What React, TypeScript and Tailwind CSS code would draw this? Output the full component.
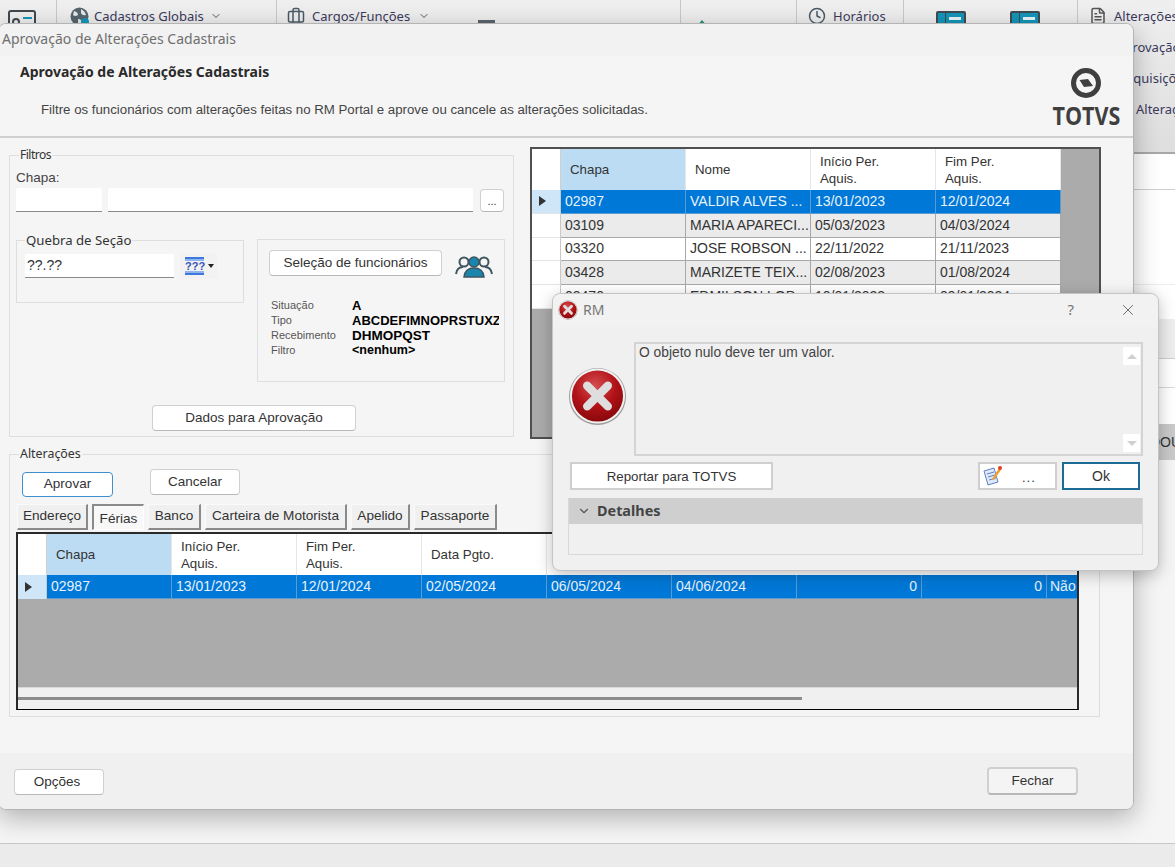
import React from "react";
import { ChevronDown, Clock, FileText, Briefcase, X } from "lucide-react";

const NOTO = "font-['Noto_Sans',sans-serif]";
const ARIAL = "font-['Liberation_Sans',sans-serif]";

function ErrorIcon({ size, id }: { size: number; id: string }) {
  return (
    <svg width={size} height={size} viewBox="0 0 60 60" className="shrink-0">
      <defs>
        <radialGradient id={id} cx="45%" cy="30%" r="75%">
          <stop offset="0%" stopColor="#d64c50" />
          <stop offset="55%" stopColor="#b01216" />
          <stop offset="100%" stopColor="#82070b" />
        </radialGradient>
      </defs>
      <circle cx="30" cy="30" r="29" fill="#9c9c9c" />
      <circle cx="30" cy="29.5" r="28" fill="#f2f2f2" />
      <circle cx="30" cy="29.5" r="26" fill={`url(#${id})`} />
      <path d="M19.5 19 L40.5 40 M40.5 19 L19.5 40" stroke="#dedede" strokeWidth="8.5" strokeLinecap="round" />
    </svg>
  );
}

function TotvsLogo() {
  return (
    <div className="flex flex-col items-center w-[68px]">
      <svg width="32" height="32" viewBox="0 0 32 32">
        <circle cx="16" cy="16" r="12.5" fill="none" stroke="#3f3f3f" strokeWidth="5" />
        <path d="M9.5 13 L18 12 L23 19 L14 20 Z" fill="#3f3f3f" />
      </svg>
      <span className="font-['Open_Sans',sans-serif] font-bold text-[25px] leading-[26px] text-[#3f3f3f] mt-[3px] scale-x-[0.86]">TOTVS</span>
    </div>
  );
}

function BookIcon() {
  return (
    <svg width="30" height="24" viewBox="0 0 30 24" className="shrink-0">
      <rect x="0" y="0" width="30" height="24" rx="2" fill="#3f4a52" />
      <rect x="2" y="2" width="7" height="20" fill="#1495b8" />
      <rect x="10" y="2" width="18" height="20" fill="#1495b8" />
      <rect x="13" y="6" width="12" height="3" fill="#e8f4f8" />
    </svg>
  );
}

function GlobeIcon() {
  return (
    <svg width="20" height="20" viewBox="0 0 20 20" className="shrink-0">
      <circle cx="9.5" cy="9.5" r="9" fill="#56646e" />
      <path d="M4 4 Q8 5 8 8 Q5 10 3 8 Z M11 2 Q15 4 16 8 Q12 9 11 6 Z M8 12 Q12 12 12 16 Q10 18 8 17 Z" fill="#e4e7ea" />
      <circle cx="15" cy="15" r="4" fill="#1495b8" />
    </svg>
  );
}

function Ribbon() {
  return (
    <div className="h-[152px] flex bg-gradient-to-b from-[#efefef] to-[#dedede] text-[13px] text-[#3a3a5c] font-['Noto_Sans',sans-serif] border-b-[2px] border-[#a8a8a8] box-content">
      <div className="w-[57px] h-[24px] border-r border-[#c8c8c8] pl-[8px] pt-[10px]">
        <svg width="28" height="20" viewBox="0 0 28 20"><rect x="1" y="1" width="26" height="20" rx="2" fill="none" stroke="#40484e" strokeWidth="2" /><circle cx="8" cy="12" r="3" fill="none" stroke="#40484e" strokeWidth="2" /><rect x="15" y="7" width="9" height="2" fill="#1495b8" /></svg>
      </div>
      <div className="w-[220px] h-[24px] border-r border-[#c8c8c8] flex items-start pt-[7px] pl-[13px] gap-[4px]">
        <GlobeIcon />
        <span className="leading-[18px] w-[112px] whitespace-nowrap">Cadastros Globais</span>
        <ChevronDown size={12} className="mt-[3px] text-[#555]" />
      </div>
      <div className="w-[404px] h-[24px] border-r border-[#c8c8c8] flex items-start pt-[7px] pl-[10px] overflow-hidden">
        <Briefcase size={18} className="text-[#4a5a66] shrink-0" />
        <span className="leading-[18px] ml-[7px] w-[106px] whitespace-nowrap">Cargos/Funções</span>
        <ChevronDown size={12} className="mt-[3px] text-[#555] shrink-0" />
        <div className="ml-[48px] mt-[13px] w-[17px] h-[14px] bg-[#5a646c] shrink-0" />
        <span className="ml-[9px] mt-[14px] leading-[18px] whitespace-nowrap">Kits Transporte</span>
      </div>
      <div className="w-[116px] h-[24px] border-r border-[#c8c8c8] pl-[15px] pt-[20px] flex items-start gap-[12px] overflow-hidden">
        <div className="w-0 h-0 border-x-[6px] border-x-transparent border-b-[7px] border-b-[#1f8f78]" />
        <span className="leading-[18px]">Férias</span>
      </div>
      <div className="w-[107px] h-[24px] border-r border-[#c8c8c8] pl-[11px] pt-[7px] flex items-start gap-[7px]">
        <Clock size={18} className="text-[#4a5a66]" />
        <span className="leading-[18px]">Horários</span>
      </div>
      <div className="w-[174px] h-[24px] border-r border-[#c8c8c8] pl-[32px] pt-[11px] flex gap-[44px] overflow-hidden"><BookIcon /><BookIcon /></div>
      <div className="w-[97px] flex flex-col pl-[11px] pt-[7px] text-[13px] overflow-hidden">
        <div className="h-[31px] flex gap-[7px] items-start whitespace-nowrap"><FileText size={18} className="text-[#555] shrink-0" /><span>Alterações</span></div>
        <div className="h-[31px] pl-[27px] whitespace-nowrap">Aprovação</div>
        <div className="h-[31px] pl-[36px] whitespace-nowrap">Aquisições</div>
        <div className="h-[31px] pl-[47px] whitespace-nowrap">Alterações</div>
      </div>
    </div>
  );
}

function Background() {
  return (
    <div className="flex flex-col h-full">
      <Ribbon />
      <div className="h-[36px] bg-white border-b border-[#cfcfcf]" />
      <div className="h-[95px] bg-white border-b border-[#ececec]" />
      <div className="h-[34px] bg-white" />
      <div className="h-[40px] bg-[#ededed] border-b border-[#cfcfcf]" />
      <div className="h-[29px] bg-white border-b border-[#d8d8d8]" />
      <div className="h-[36px] bg-white" />
      <div className="h-[36px] bg-[#c9c9c9] pl-[1150px] flex items-center text-[14px] text-[#333] font-['Liberation_Sans',sans-serif] whitespace-nowrap overflow-hidden">DOUGLAS</div>
      <div className="flex-1 bg-[#f5f5f5] border-b border-[#c8c8c8]" />
      <div className="h-[23px] bg-[#ebebeb]" />
    </div>
  );
}

function Btn({ className, children }: { className: string; children: React.ReactNode }) {
  return (
    <div className={`flex items-center justify-center bg-white border border-[#d0d0d0] border-b-[#b8b8b8] rounded-[4px] text-[13.5px] text-[#333] ${ARIAL} ${className}`}>
      {children}
    </div>
  );
}

const topRows = [
  ["02987", "VALDIR ALVES ...", "13/01/2023", "12/01/2024"],
  ["03109", "MARIA APARECI...", "05/03/2023", "04/03/2024"],
  ["03320", "JOSE ROBSON ...", "22/11/2022", "21/11/2023"],
  ["03428", "MARIZETE TEIX...", "02/08/2023", "01/08/2024"],
  ["03470", "EDMILSON LOP...", "10/01/2023", "09/01/2024"],
];

function Triangle() {
  return <div className="w-0 h-0 border-y-[5px] border-y-transparent border-l-[7px] border-l-[#333]" />;
}

function HeadCell({ w, active, children }: { w: string; active?: boolean; children: React.ReactNode }) {
  return (
    <div className={`${w} h-full shrink-0 flex items-center pl-[9px] leading-[17px] text-[13.3px] text-[#333] border-r border-[#e6e6e6] ${active ? "bg-[#bcdcf4]" : "bg-white"}`}>
      <div>{children}</div>
    </div>
  );
}

function TopGrid() {
  return (
    <div className={`w-[571px] h-[292px] mt-[9px] ml-[16px] border-2 border-[#505050] bg-[#ababab] ${ARIAL} overflow-hidden`}>
      <div className="flex h-[41px] w-[529px]">
        <div className="w-[29px] bg-white border-r border-[#d0d0d0]" />
        <HeadCell w="w-[125px]" active>Chapa</HeadCell>
        <HeadCell w="w-[125px]">Nome</HeadCell>
        <HeadCell w="w-[125px]">Início Per.<br />Aquis.</HeadCell>
        <HeadCell w="w-[125px]">Fim Per.<br />Aquis.</HeadCell>
      </div>
      {topRows.map((r, i) => {
        const sel = i === 0;
        const bg = sel ? "bg-[#0078d7] text-[#e8f2fb]" : i % 2 ? "bg-[#ebebeb] text-[#333]" : "bg-white text-[#333]";
        return (
          <div key={r[0]} className="flex h-[23.75px] w-[529px]">
            <div className={`w-[29px] flex items-center pl-[7px] border-b border-[#e4e4e4] border-r border-r-[#c8c8c8] ${sel ? "bg-[#cfe6f8]" : "bg-white"}`}>{sel && <Triangle />}</div>
            {r.map((c) => (
              <div key={c} className={`w-[125px] shrink-0 flex items-center pl-[4px] text-[14px] whitespace-nowrap border-r border-b ${sel ? "border-[#5b9bd0]" : "border-[#a8a8a8]"} ${bg}`}>{c}</div>
            ))}
          </div>
        );
      })}
    </div>
  );
}

const bottomCells: [string, boolean][] = [
  ["02987", false],
  ["13/01/2023", false],
  ["12/01/2024", false],
  ["02/05/2024", false],
  ["06/05/2024", false],
  ["04/06/2024", false],
  ["0", true],
  ["0", true],
];

function BottomGrid() {
  return (
    <div className={`w-[1063px] h-[178px] ml-[6px] border-2 border-b border-[#2a2a2a] border-b-black bg-[#ababab] flex flex-col ${ARIAL}`}>
      <div className="flex h-[41px] overflow-hidden">
        <div className="w-[29px] shrink-0 bg-white border-r border-[#d0d0d0]" />
        <HeadCell w="w-[125px]" active>Chapa</HeadCell>
        <HeadCell w="w-[125px]">Início Per.<br />Aquis.</HeadCell>
        <HeadCell w="w-[125px]">Fim Per.<br />Aquis.</HeadCell>
        <HeadCell w="w-[125px]">Data Pgto.</HeadCell>
        <div className="flex-1 bg-white" />
      </div>
      <div className="flex h-[24px] overflow-hidden">
        <div className="w-[29px] shrink-0 flex items-center pl-[7px] bg-[#cfe6f8] border-r border-[#c8c8c8]"><Triangle /></div>
        {bottomCells.map(([c, right], i) => (
          <div key={i} className={`w-[125px] shrink-0 flex items-center px-[4px] text-[14px] text-[#e8f2fb] bg-[#0078d7] border-r border-b border-[#5b9bd0] ${right ? "justify-end" : ""}`}>{c}</div>
        ))}
        <div className="flex-1 flex items-center pl-[3px] text-[14px] text-[#e8f2fb] bg-[#0078d7] border-b border-[#5b9bd0]">Não</div>
      </div>
      <div className="flex-1" />
      <div className="h-[22px] bg-[#f0f0f0] border-t border-[#d8d8d8] flex items-center">
        <div className="w-[784px] h-[3px] bg-[#8c8c8c]" />
      </div>
    </div>
  );
}

function Tab({ w, active, children }: { w: string; active?: boolean; children: React.ReactNode }) {
  return (
    <div className={`${w} h-[26px] flex items-center justify-center text-[13.6px] text-[#333] ${ARIAL} ${active ? "bg-[#f8f8f8] border-t-2 border-l-2 border-[#8a8a8a] border-r border-b border-r-white border-b-white pt-[3px]" : "bg-[#f0f0f0] border-r-2 border-b-2 border-[#8a8a8a] border-t border-l border-t-[#fafafa] border-l-[#fafafa]"}`}>
      {children}
    </div>
  );
}

function Filtros() {
  return (
    <fieldset className="w-[505px] h-[292px] ml-[10px] mt-[7px] border border-[#dedede] min-w-0 shrink-0">
      <legend className={`ml-[9px] px-[1px] text-[12px] tracking-[-0.5px] leading-[20px] text-[#333] ${NOTO}`}>Filtros</legend>
      <div className={`ml-[6px] mt-[4px] text-[13.5px] leading-[18px] text-[#444] ${ARIAL}`}>Chapa:</div>
      <div className="flex ml-[6px] mt-[1px] items-start">
        <div className="w-[86px] h-[24px] bg-white border-b border-[#8a8a8a] rounded-t-[3px]" />
        <div className="w-[365px] h-[24px] ml-[6px] bg-white border-b border-[#8a8a8a] rounded-t-[3px]" />
        <Btn className="w-[24px] h-[23px] ml-[7px] mt-[1px] !text-[11px] items-end pb-[2px]">...</Btn>
      </div>
      <div className="flex mt-[18px] ml-[6px] items-start">
        <fieldset className="w-[228px] h-[73px] border border-[#dedede] min-w-0">
          <legend className={`ml-[8px] px-[1px] text-[13.2px] leading-[20px] text-[#333] ${NOTO}`}>Quebra de Seção</legend>
          <div className="flex items-center ml-[8px] mt-[3px]">
            <div className={`w-[149px] h-[24px] bg-white border-b border-[#8a8a8a] pl-[2px] text-[14px] leading-[23px] text-[#333] ${ARIAL}`}>??.??</div>
            <div className="ml-[6px] w-[37px] h-[26px] bg-[#f2f2f2] flex items-center pl-[5px] gap-[3px]">
              <svg width="20" height="18" viewBox="0 0 20 18">
                <rect x="0" y="0" width="19" height="2" fill="#3f78dc" />
                <rect x="0" y="2" width="19" height="2" fill="#8fb4ee" />
                <rect x="0" y="14" width="19" height="2" fill="#8fb4ee" />
                <rect x="0" y="16" width="19" height="2" fill="#3f78dc" />
                <text x="0" y="13" fontSize="11" fontWeight="700" fontFamily="Liberation Sans" fill="#3552b8">???</text>
              </svg>
              <div className="w-0 h-0 border-x-[3.5px] border-x-transparent border-t-[4px] border-t-[#222]" />
            </div>
          </div>
        </fieldset>
        <div className="w-[248px] h-[143px] ml-[13px] mt-[9px] border border-[#dedede] pl-[11px] pt-[10px] overflow-hidden">
          <div className="flex items-start">
            <Btn className="w-[173px] h-[26px]">Seleção de funcionários</Btn>
            <svg width="38" height="24" viewBox="0 0 38 24" className="ml-[13px] mt-[4px]">
              <g fill="none" stroke="#3f5560" strokeWidth="2">
                <circle cx="9" cy="8" r="4.5" />
                <circle cx="29" cy="8" r="4.5" />
                <path d="M1 20 Q2 13 8 13 M37 20 Q36 13 30 13" />
              </g>
              <circle cx="19" cy="8" r="5" fill="#1a86ad" stroke="#3f5560" strokeWidth="1.5" />
              <path d="M9 23 Q10 14 19 14 Q28 14 29 23 Z" fill="#1a86ad" stroke="#3f5560" strokeWidth="1.5" />
            </svg>
          </div>
          <div className={`grid grid-cols-[81px_147px] ml-[2px] mt-[20px] text-[11px] leading-[15px] ${ARIAL} whitespace-nowrap`}>
            <span className="text-[#555]">Situação</span><span className="font-bold text-[13px] text-black">A</span>
            <span className="text-[#555]">Tipo</span><span className="font-bold text-[13px] text-black overflow-hidden">ABCDEFIMNOPRSTUXZ</span>
            <span className="text-[#555]">Recebimento</span><span className="font-bold text-[13.5px] text-black">DHMOPQST</span>
            <span className="text-[#555]">Filtro</span><span className="font-bold text-[12.5px] text-black">&lt;nenhum&gt;</span>
          </div>
        </div>
      </div>
      <div className="flex justify-start ml-[142px] mt-[23px]">
        <Btn className="w-[204px] h-[26px]">Dados para Aprovação</Btn>
      </div>
    </fieldset>
  );
}

function Alteracoes() {
  return (
    <fieldset className="w-[1091px] h-[273px] ml-[10px] mt-[5px] border border-[#dedede] min-w-0">
      <legend className={`ml-[9px] px-[1px] text-[12.4px] leading-[20px] text-[#333] ${NOTO}`}>Alterações</legend>
      <div className="flex items-start ml-[12px] h-[40px]">
        <Btn className="w-[91px] h-[25px] mt-[8px] !border-[#3d8fd0] !border-[1.5px]">Aprovar</Btn>
        <Btn className="w-[90px] h-[26px] ml-[37px] mt-[5px]">Cancelar</Btn>
      </div>
      <div className="flex ml-[7px] gap-[4px]">
        <Tab w="w-[71px]">Endereço</Tab>
        <Tab w="w-[52px]" active>Férias</Tab>
        <Tab w="w-[53px]">Banco</Tab>
        <Tab w="w-[142px]">Carteira de Motorista</Tab>
        <Tab w="w-[59px]">Apelido</Tab>
        <Tab w="w-[83px]">Passaporte</Tab>
      </div>
      <div className="mt-[2px]"><BottomGrid /></div>
    </fieldset>
  );
}

function MainWindow() {
  return (
    <div className="absolute left-[-2px] top-[23px] w-[1136px] h-[787px] rounded-[8px] overflow-hidden border border-[#b4b4b4] bg-[#f5f5f5] flex flex-col shadow-[0_8px_26px_rgba(0,0,0,0.28)]">
      <div className={`h-[32px] shrink-0 bg-[#f2f2f2] pl-[3px] pb-[4px] flex items-center text-[14px] text-[#6f6f6f] ${NOTO}`}>Aprovação de Alterações Cadastrais</div>
      <div className="h-[80px] shrink-0 flex justify-between border-b-[2px] border-[#cfcfcf] box-content">
        <div>
          <div className={`ml-[21px] mt-[6px] font-bold text-[14px] leading-[20px] text-[#2a2a2a] ${NOTO}`}>Aprovação de Alterações Cadastrais</div>
          <div className={`ml-[42px] mt-[19px] text-[13.25px] leading-[18px] text-[#444] ${ARIAL}`}>Filtre os funcionários com alterações feitas no RM Portal e aprove ou cancele as alterações solicitadas.</div>
        </div>
        <div className="mr-[13px] mt-[11px]"><TotvsLogo /></div>
      </div>
      <div className="flex-1 min-h-0 flex flex-col">
        <div className="flex items-start">
          <Filtros />
          <TopGrid />
        </div>
        <Alteracoes />
      </div>
      <div className="h-[56px] shrink-0 bg-[#f0f0f0] flex items-start justify-between">
        <Btn className="w-[90px] h-[26px] ml-[15px] mt-[16px] pr-[4px]">Opções</Btn>
        <Btn className="w-[91px] h-[28px] mr-[55px] mt-[14px] !bg-[#f4f4f4] !border-[2px]">Fechar</Btn>
      </div>
    </div>
  );
}

function ErrorDialog() {
  return (
    <div className={`absolute left-[552px] top-[293px] w-[607px] h-[278px] rounded-[8px] border border-[#c4c4c4] bg-[#f0f0f0] shadow-[0_4px_16px_rgba(0,0,0,0.25)] flex flex-col ${ARIAL}`}>
      <div className="h-[33px] shrink-0 flex items-center pl-[5px] pr-[21px] pb-[2px] bg-[#f2f2f2] rounded-t-[8px]">
        <ErrorIcon size={20} id="err-small" />
        <span className={`ml-[5px] text-[14px] text-[#777] ${NOTO}`}>RM</span>
        <span className={`ml-auto text-[15px] text-[#777] ${NOTO}`}>?</span>
        <X size={18} strokeWidth={1} className="ml-[45px] text-[#444]" />
      </div>
      <div className="flex mt-[15px] ml-[15px] items-start">
        <div className="mt-[25px]"><ErrorIcon size={59} id="err-big" /></div>
        <div className="w-[509px] h-[114px] ml-[7px] border-2 border-[#d4d4d4] pl-[3px] pt-[1px] flex justify-between text-[13.8px] text-[#444]">
          <span className="leading-[16px]">O objeto nulo deve ter um valor.</span>
          <div className="flex flex-col justify-between py-[2px] pr-[1px]">
            <div className="w-[17px] h-[18px] bg-white flex items-center justify-center"><div className="w-0 h-0 border-x-[5px] border-x-transparent border-b-[5px] border-b-[#d0d0d0]" /></div>
            <div className="w-[17px] h-[18px] bg-white flex items-center justify-center"><div className="w-0 h-0 border-x-[5px] border-x-transparent border-t-[5px] border-t-[#d0d0d0]" /></div>
          </div>
        </div>
      </div>
      <div className="flex items-start mt-[6px] ml-[17px]">
        <div className="w-[203px] h-[28px] pt-[1px] bg-white border-2 border-[#cfcfcf] flex items-center justify-center text-[13.3px] text-[#333]">Reportar para TOTVS</div>
        <div className="w-[79px] h-[28px] ml-[205px] bg-white border-2 border-[#cfcfcf] flex items-center pl-[2px] text-[#333]">
          <svg width="20" height="22" viewBox="0 0 20 22" className="shrink-0">
            <path d="M2 6 L12 3 L16 17 L6 20 Z" fill="#dfe9f8" stroke="#5c7fc4" strokeWidth="1" />
            <path d="M5 9 L12 7 M6 12 L13 10 M7 15 L14 13" stroke="#5c7fc4" strokeWidth="1" />
            <path d="M10 14 L17 3 L19 5 L12 15 Z" fill="#f0a030" />
            <circle cx="18" cy="3" r="2" fill="#e04020" />
          </svg>
          <span className="ml-[20px] mt-[3px] text-[13px] leading-[14px] tracking-[1px]">...</span>
        </div>
        <div className="w-[78px] h-[28px] ml-[5px] bg-white border-2 border-[#1b6b96] flex items-center justify-center text-[14px] text-[#333]">Ok</div>
      </div>
      <div className="w-[575px] h-[57px] ml-[15px] mt-[8px] border border-[#d8d8d8] border-t-0">
        <div className="h-[26px] bg-[#cfcfcf] flex items-center pl-[8px] gap-[6px]">
          <ChevronDown size={14} className="text-[#555]" />
          <span className={`font-bold text-[14.4px] text-[#444] ${NOTO}`}>Detalhes</span>
        </div>
      </div>
    </div>
  );
}

export default function App() {
  return (
    <div className="relative w-[1175px] h-[867px] overflow-hidden bg-[#f2f2f2]">
      <Background />
      <MainWindow />
      <ErrorDialog />
    </div>
  );
}
